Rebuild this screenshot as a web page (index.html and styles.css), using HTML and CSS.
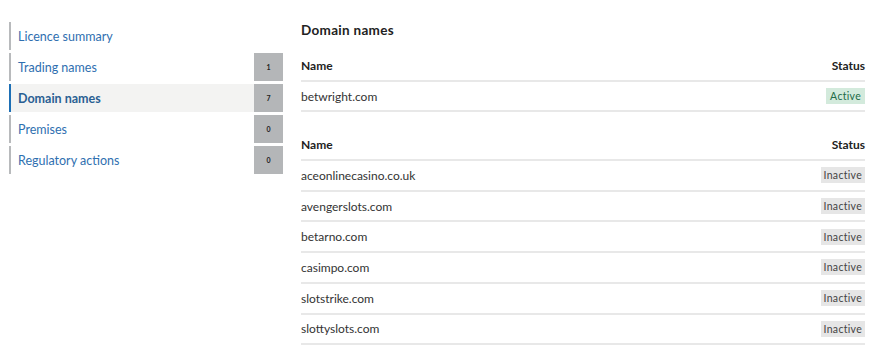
FILE: index.html
```html
<!DOCTYPE html>
<html lang="en">

<head>
    <meta charset="UTF-8">
    <meta name="viewport" content="width=device-width, initial-scale=1.0">
    <title>Licence - Domain names</title>
    <link rel="stylesheet" href="styles.css">
</head>

<body>
    <!-- side menu -->
    <ul class="side-nav">
        <li class="nav-item"><a href="#">Licence summary</a></li>
        <li class="nav-item"><a href="#">Trading names</a><span class="count">1</span></li>
        <li class="nav-item current"><a href="#">Domain names</a><span class="count">7</span></li>
        <li class="nav-item"><a href="#">Premises</a><span class="count">0</span></li>
        <li class="nav-item"><a href="#">Regulatory actions</a><span class="count">0</span></li>
    </ul>

    <div class="content">
        <h2>Domain names</h2>

        <table class="domains">
            <thead>
                <tr>
                    <th>Name</th>
                    <th class="status">Status</th>
                </tr>
            </thead>
            <tbody>
                <tr>
                    <td>betwright.com</td>
                    <td class="status"><span class="tag active">Active</span></td>
                </tr>
            </tbody>
        </table>

        <table class="domains">
            <thead>
                <tr>
                    <th>Name</th>
                    <th class="status">Status</th>
                </tr>
            </thead>
            <tbody>
                <tr>
                    <td>aceonlinecasino.co.uk</td>
                    <td class="status"><span class="tag">Inactive</span></td>
                </tr>
                <tr>
                    <td>avengerslots.com</td>
                    <td class="status"><span class="tag">Inactive</span></td>
                </tr>
                <tr>
                    <td>betarno.com</td>
                    <td class="status"><span class="tag">Inactive</span></td>
                </tr>
                <tr>
                    <td>casimpo.com</td>
                    <td class="status"><span class="tag">Inactive</span></td>
                </tr>
                <tr>
                    <td>slotstrike.com</td>
                    <td class="status"><span class="tag">Inactive</span></td>
                </tr>
                <tr>
                    <td>slottyslots.com</td>
                    <td class="status"><span class="tag">Inactive</span></td>
                </tr>
            </tbody>
        </table>
    </div>
</body>

</html>
```

FILE: styles.css
```css
body {
    margin: 0;
    padding: 22px 5px 0 9px;
    display: flex;
    align-items: flex-start;
    gap: 18px;
    font-family: Lato, "Noto Sans", sans-serif;
    color: #2b2b2b;
    background: white;
}

/* side menu */
.side-nav {
    list-style: none;
    margin: 0;
    padding: 0;
    width: 274px;
    flex-shrink: 0;
    display: flex;
    flex-direction: column;
    gap: 3px;
}

.nav-item {
    display: flex;
    height: 28px;
    border-left: 2px solid #b8babc;
}

.nav-item a {
    flex: 1;
    display: flex;
    align-items: center;
    padding-left: 7px;
    font-size: 12.5px;
    color: #2f6fb0;
    text-decoration: none;
}

.nav-item.current {
    border-left-color: #1d6fb5;
}

.nav-item.current a {
    background-color: #f3f3f2;
    font-weight: bold;
    color: #2a5f93;
}

.count {
    width: 29px;
    display: flex;
    align-items: center;
    justify-content: center;
    background-color: #b4b6b8;
    font-size: 7px;
    font-weight: bold;
    color: #222;
}

/* domain tables */
.content {
    flex: 1;
}

h2 {
    margin: 0 0 13px 0;
    font-size: 13.5px;
    font-weight: bold;
    letter-spacing: 0.3px;
    color: #222;
}

.domains {
    width: 100%;
    border-collapse: collapse;
    margin-bottom: 18px;
    font-size: 12px;
}

.domains th,
.domains td {
    text-align: left;
    padding: 0;
    height: 28.7px;
    border-bottom: 2px solid #e8e8e8;
}

.domains th {
    font-weight: bold;
    color: #222;
}

.domains td {
    color: #333;
}

.domains .status {
    text-align: right;
}

.tag {
    display: inline-block;
    padding: 2px 3px;
    font-size: 10.5px;
    letter-spacing: 0.3px;
    background-color: #e6e6e6;
    color: #444;
}

.tag.active {
    padding: 2px 4px;
    background-color: #d3eadc;
    color: #226b47;
}
```
